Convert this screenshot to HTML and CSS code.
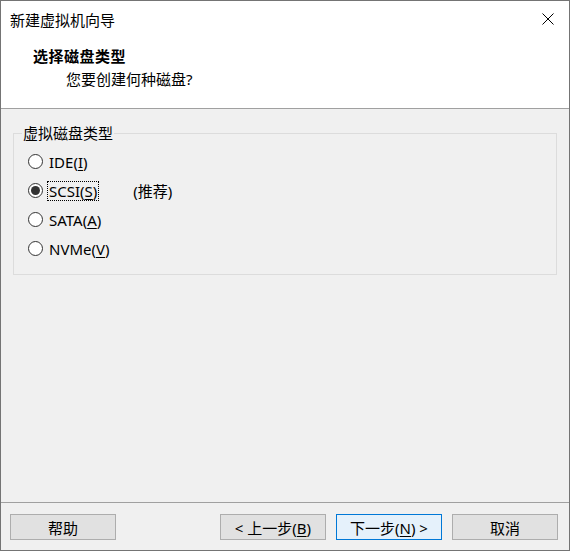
FILE: index.html
```html
<!DOCTYPE html>
<html lang="zh-CN">
<head>
<meta charset="UTF-8">
<title>新建虚拟机向导</title>
<link rel="stylesheet" href="styles.css">
</head>
<body>

<div class="window">
    <div class="titlebar">
        <span class="title">新建虚拟机向导</span>
        <svg class="close" width="12" height="12" viewBox="0 0 12 12">
            <path d="M0.5 0.5 L11.5 11.5 M11.5 0.5 L0.5 11.5" stroke="#000" stroke-width="1" fill="none"/>
        </svg>
    </div>

    <div class="header">
        <div class="header-title">选择磁盘类型</div>
        <div class="header-sub">您要创建何种磁盘?</div>
    </div>

    <div class="content">
        <fieldset class="group">
            <legend>虚拟磁盘类型</legend>
            <div class="radio-row">
                <span class="radio"></span>
                <span class="label">IDE(<u>I</u>)</span>
            </div>
            <div class="radio-row">
                <span class="radio checked"></span>
                <span class="label focused">SCSI(<u>S</u>)</span>
                <span class="note">(推荐)</span>
            </div>
            <div class="radio-row">
                <span class="radio"></span>
                <span class="label">SATA(<u>A</u>)</span>
            </div>
            <div class="radio-row">
                <span class="radio"></span>
                <span class="label">NVMe(<u>V</u>)</span>
            </div>
        </fieldset>
    </div>

    <div class="footer">
        <button class="btn">帮助</button>
        <div class="footer-right">
            <button class="btn">&lt; 上一步(<u>B</u>)</button>
            <button class="btn default">下一步(<u>N</u>) &gt;</button>
            <button class="btn">取消</button>
        </div>
    </div>
</div>

</body>
</html>
```

FILE: styles.css
```css
body {
    margin: 0;
    padding: 0;
    font-family: "Noto Sans", "Noto Sans CJK SC", sans-serif;
    font-size: 15px;
    color: #000;
}
.window {
    width: 570px;
    height: 551px;
    box-sizing: border-box;
    border: 1px solid #747474;
    background-color: #f0f0f0;
    display: flex;
    flex-direction: column;
}
.titlebar {
    height: 36px;
    background-color: #fff;
    display: flex;
    align-items: center;
    justify-content: space-between;
    padding: 0 15px 0 9px;
}
.title {
    line-height: 20px;
    margin-top: 1px;
}
.close {
    display: block;
}
.header {
    height: 72px;
    background-color: #fff;
    border-bottom: 1px solid #a0a0a0;
    box-sizing: border-box;
    padding-top: 9px;
}
.header-title {
    font-weight: bold;
    line-height: 20px;
    padding-left: 32px;
    letter-spacing: 0.5px;
}
.header-sub {
    line-height: 20px;
    padding-left: 65px;
    margin-top: 3px;
}
.content {
    flex: 1;
}
.group {
    margin: 14px 12px 0 12px;
    padding: 4px 0 11px 14px;
    border: 1px solid #dcdcdc;
}
.group legend {
    padding: 0 1px;
    margin-left: -6px;
    line-height: 20px;
}
.radio-row {
    display: flex;
    align-items: center;
    height: 29px;
}
.radio {
    width: 15px;
    height: 15px;
    box-sizing: border-box;
    border: 1px solid #333;
    border-radius: 50%;
    background-color: #fff;
    display: flex;
    align-items: center;
    justify-content: center;
}
.radio.checked::after {
    content: "";
    width: 9px;
    height: 9px;
    border-radius: 50%;
    background-color: #333;
}
.label {
    margin-left: 5px;
    line-height: 18px;
    padding: 0 1px;
}
.label u,
.btn u {
    text-decoration-thickness: 1px;
    text-underline-offset: 2px;
}
.focused {
    outline: 1px dotted #000;
}
.note {
    margin-left: 35px;
}
.footer {
    height: 48px;
    border-top: 1px solid #a0a0a0;
    box-sizing: border-box;
    display: flex;
    justify-content: space-between;
    padding: 11px 11px 0 9px;
}
.footer-right {
    display: flex;
    gap: 10px;
}
.btn {
    width: 106px;
    height: 26px;
    font-family: inherit;
    font-size: 15px;
    background-color: #e1e1e1;
    border: 1px solid #adadad;
    padding: 0;
    color: #000;
}
.btn.default {
    background-color: #e5f1fb;
    border-color: #0078d7;
}
```
